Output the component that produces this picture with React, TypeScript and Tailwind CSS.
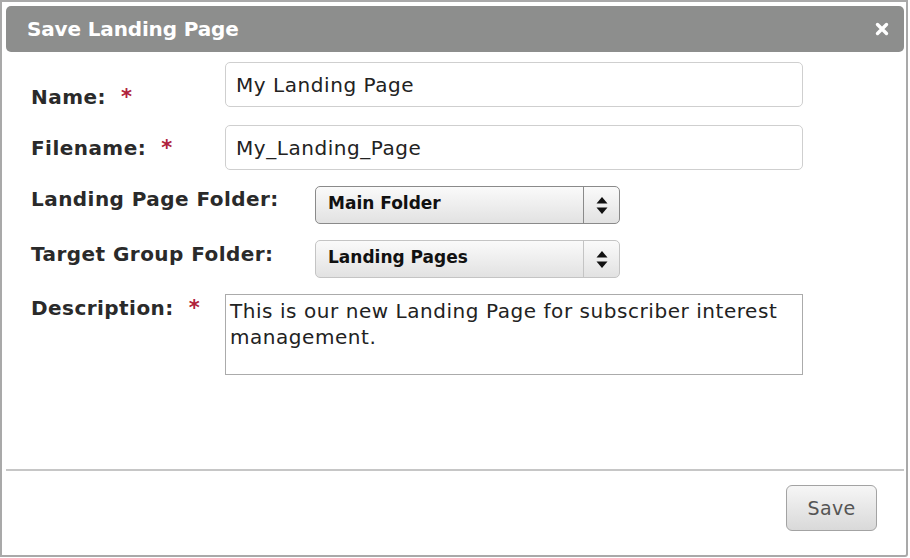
import React from "react";

const font = "font-['DejaVu_Sans',Verdana,sans-serif]";

function Star() {
  return <span className="ml-[15px] text-[21px] font-bold tracking-normal text-[#b0223c]">*</span>;
}

function SelectArrows() {
  return (
    <svg viewBox="0 0 12 19" className="h-[19px] w-[12px]">
      <polygon points="0.5,7.5 11.5,7.5 6,1" fill="#111" />
      <polygon points="0.5,11.5 11.5,11.5 6,18" fill="#111" />
    </svg>
  );
}

function FakeSelect({ value, dark }: { value: string; dark?: boolean }) {
  return (
    <div
      className={`flex h-[38px] w-[305px] items-stretch rounded-[5px] border bg-gradient-to-b from-[#fafafa] to-[#e2e2e2] ${
        dark ? "border-[#8a8a8a]" : "border-[#c4c4c4]"
      }`}
    >
      <div className="flex flex-1 items-center pb-[5px] pl-3 text-[17px] font-bold tracking-normal text-[#111]">
        {value}
      </div>
      <div
        className={`flex w-[36px] items-center justify-center border-l ${
          dark ? "border-[#8a8a8a]" : "border-[#c4c4c4]"
        }`}
      >
        <SelectArrows />
      </div>
    </div>
  );
}

function TextBox({ value }: { value: string }) {
  return (
    <div className="flex h-[45px] w-[578px] items-center rounded-[5px] border border-[#cfcfcf] bg-white pl-[10px] text-[20px] font-normal tracking-[0.55px] text-[#222]">
      {value}
    </div>
  );
}

export default function App() {
  return (
    <div className={`${font} h-[558px] w-[910px] bg-white`}>
      <div className="flex h-[557px] w-[908px] flex-col rounded-br-[3px] border-2 border-[#a9a9a9] bg-white pl-1 pr-0.5 pt-1">
        {/* title bar */}
        <div className="flex h-[46px] shrink-0 items-center justify-between rounded-[5px] bg-[#8d8e8d] pl-[21px] pr-[15px]">
          <span className="text-[20px] font-bold tracking-[-0.15px] text-white">Save Landing Page</span>
          <svg viewBox="0 0 14 14" className="h-[14px] w-[14px]">
            <path d="M2.5 2.5 L11.5 11.5 M11.5 2.5 L2.5 11.5" stroke="#fff" strokeWidth="3.4" strokeLinecap="round" />
          </svg>
        </div>

        {/* form */}
        <div className="flex flex-1 flex-col pl-[25px] pt-[10px] text-[20px] leading-6 text-[#2a2a2a]">
          <div className="flex h-[63px] items-start">
            <div className="w-[194px] pt-[23px] font-bold tracking-[0.45px]">
              Name:<Star />
            </div>
            <TextBox value="My Landing Page" />
          </div>
          <div className="flex h-[61px] items-start">
            <div className="w-[194px] pt-[11px] font-bold tracking-[0.45px]">
              Filename:<Star />
            </div>
            <TextBox value="My_Landing_Page" />
          </div>
          <div className="flex h-[54px] items-start">
            <div className="w-[284px] pt-[1px] font-bold tracking-[0.45px]">Landing Page Folder:</div>
            <FakeSelect value="Main Folder" dark />
          </div>
          <div className="flex h-[54px] items-start">
            <div className="w-[284px] pt-[2px] font-bold tracking-[0.45px]">Target Group Folder:</div>
            <FakeSelect value="Landing Pages" />
          </div>
          <div className="flex items-start">
            <div className="w-[194px] pt-[2px] font-bold tracking-[0.45px]">
              Description:<Star />
            </div>
            <div className="h-[81px] w-[578px] border border-[#ababab] bg-white px-[4px] pt-[3px] text-[20px] leading-[26px] tracking-[0.55px] text-[#222]">
              This is our new Landing Page for subscriber interest management.
            </div>
          </div>
        </div>

        {/* footer */}
        <div className="flex h-[86px] shrink-0 items-start justify-end border-t-2 border-[#c6c6c6] pr-[27px] pt-[14px]">
          <button className="h-[46px] w-[91px] rounded-[6px] border border-[#a3a3a3] bg-gradient-to-b from-[#f6f6f6] to-[#d9d9d9] text-[19px] tracking-[0.3px] text-[#555]">
            Save
          </button>
        </div>
      </div>
    </div>
  );
}
